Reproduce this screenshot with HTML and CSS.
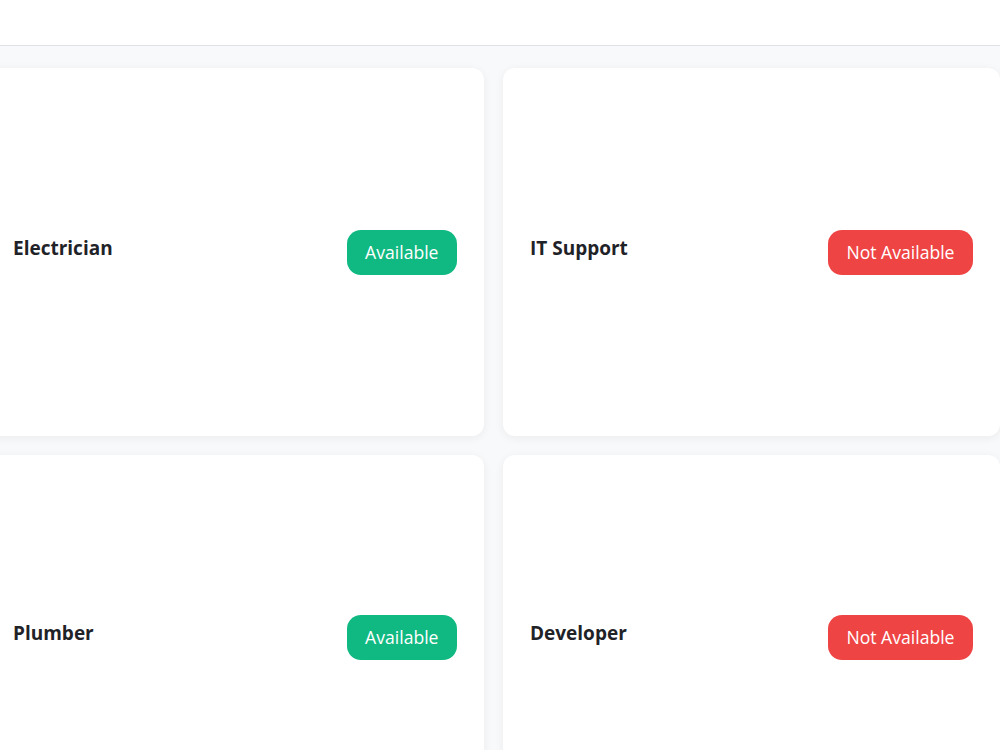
FILE: index.html
```html
<!DOCTYPE html>
<html lang="en">
<head>
<meta charset="utf-8">
<title>Services</title>
<link rel="stylesheet" href="styles.css">
</head>
<body>
  <header class="topbar"></header>
  <main class="board">
    <div class="grid">
      <section class="card">
        <h3 class="card-title">Electrician</h3>
        <span class="status status-on">Available</span>
      </section>
      <section class="card">
        <h3 class="card-title">IT Support</h3>
        <span class="status status-off">Not Available</span>
      </section>
      <section class="card">
        <h3 class="card-title">Plumber</h3>
        <span class="status status-on">Available</span>
      </section>
      <section class="card">
        <h3 class="card-title">Developer</h3>
        <span class="status status-off">Not Available</span>
      </section>
    </div>
  </main>
</body>
</html>
```
FILE: styles.css
```css
html, body {
  margin: 0;
  padding: 0;
  background: #f8f9fa;
  font-family: "Open Sans", "Noto Sans", sans-serif;
  color: #1f2328;
  overflow: hidden;
}

.topbar {
  height: 45px;
  background: #ffffff;
  border-bottom: 1px solid #dee2e6;
}

.board {
  padding: 22px 0 0;
}

.grid {
  display: grid;
  grid-template-columns: 498px 497px;
  grid-template-rows: 368px 364px;
  gap: 19px;
  margin-left: -14px;
}

.card {
  background: #ffffff;
  border-radius: 12px;
  box-shadow: 0 2px 10px rgba(30, 40, 60, 0.06);
  padding: 0 27px;
  display: flex;
  align-items: center;
  justify-content: space-between;
}

.card-title {
  margin: 0 0 9px;
  font-size: 19px;
  font-weight: 700;
  color: #1f2328;
}

.status {
  display: inline-flex;
  align-items: center;
  height: 45px;
  padding: 0 18.5px;
  border-radius: 14px;
  font-size: 17.6px;
  color: #ffffff;
}

.status-on {
  background: #10b981;
}

.status-off {
  background: #ef4444;
}
```
